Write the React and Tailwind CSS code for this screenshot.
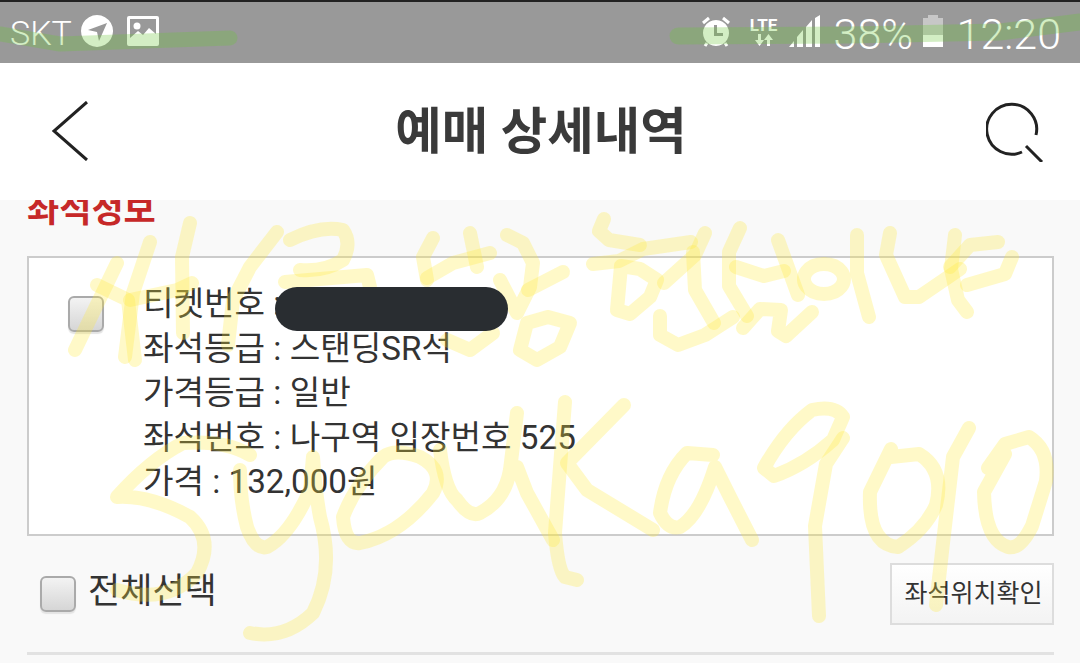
const yellow = [
  "M117 263L75 350","M97 285L128 300L135 360","M150 242L133 293L125 357","M190 223L182 257L183 333","M130 300L177 290L192 283",
  "M277 232L250 267L233 300L228 345","M290 240Q320 225 343 230Q352 243 343 260Q325 272 300 270","M285 282L367 275L370 287",
  "M433 238L423 257L427 280","M427 278L453 263L490 253","M470 233L477 267","M507 235L523 243L533 263L530 287L517 313L500 280",
  "M528 290L563 272","M548 317L570 323L560 347L537 360L520 350L527 323L548 317","M447 340L470 350L493 333",
  "M604 219L599 231L609 240L640 245","M593 264L619 261L643 249L691 242","M621 266L617 310L630 314L650 297L657 280L640 269L621 266",
  "M705 233L695 255L664 283","M693 252L695 290L714 323","M660 316L660 335L678 345L705 335L733 317","M740 228L729 252L729 286L747 316",
  "M736 267L764 276L784 271","M778 240L798 295","M824 264A20 15 0 1 1 823.9 264","M743 328L760 309L781 310L778 331L786 336L812 312",
  "M857 235L857 273L869 317","M890 233L886 255L905 297L919 297L960 269","M955 235L951 269L958 300L967 312","M998 242L970 245L950 267","M1012 257L1005 274L967 285",
  "M250 455Q225 440 183 443Q150 460 117 497Q150 495 190 517Q215 540 197 573Q167 605 117 590",
  "M240 470Q240 500 247 527Q255 550 267 547Q290 535 310 490L313 457Q315 490 320 517Q335 570 313 613Q285 640 250 633",
  "M420 457Q395 448 383 457Q355 485 343 517Q345 545 360 543Q400 535 433 493Q445 470 420 457",
  "M440 450Q445 490 457 500Q470 518 480 513Q505 500 510 470L517 413M517 467L527 493L553 540",
  "M565 402L560 467L555 533Q558 570 565 577L577 580","M624 405L567 463L587 490L653 530",
  "M713 455L687 453Q665 475 660 513Q668 530 680 527Q700 515 715 467L730 497L752 540",
  "M843 417Q835 405 812 410Q785 430 764 468L774 476Q805 465 833 440L843 417","M843 438L826 464L815 526L819 616",
  "M891 449L870 492Q868 545 898 547Q925 530 936 505Q945 470 919 454L891 457","M969 428L953 457L943 543L936 605",
  "M988 468L1005 444L1029 437Q1050 450 1046 481L1032 526Q1020 550 1008 547Q985 540 984 492L1005 454",
];

function Box() {
  return <div className="w-9 h-9 rounded-md border-2 border-[#aaaaaa] bg-gradient-to-b from-[#f3f3f3] to-[#d6d6d6] shadow-[0_2px_1px_#e4e4e4] shrink-0" />;
}

export default function App() {
  return (
    <div className="relative w-[1080px] h-[663px] overflow-hidden bg-[#f9f9f9] text-[#333] font-['Roboto','Noto_Sans_CJK_KR',sans-serif]">
      <div className="relative z-10 h-[63px] bg-[#999999] border-t-2 border-[#222] flex items-center justify-between pl-[10px] pr-[19px] text-white">
        <div className="flex items-center">
          <span className="text-[34px] font-light leading-none w-[71px]">SKT</span>
          <svg width="32" height="32" viewBox="0 0 32 32" className="-mt-1"><path fillRule="evenodd" fill="#fff" d="M16 0a16 16 0 1 0 .01 0ZM26 8 7 15l9 2 2 9Z"/></svg>
          <svg width="32" height="30" viewBox="0 0 32 30" className="ml-[14px] -mt-1"><path fillRule="evenodd" fill="#fff" d="M2 0h28a2 2 0 0 1 2 2v26a2 2 0 0 1-2 2H2a2 2 0 0 1-2-2V2a2 2 0 0 1 2-2ZM3 3v19l8-7 5 4 6-7 7 6V3Z"/><circle cx="10" cy="10" r="3.5" fill="#fff"/></svg>
        </div>
        <div className="flex items-center">
          <svg width="32" height="32" viewBox="0 0 32 32" className="-mt-1"><path stroke="#fff" strokeWidth="3" d="M3 8 9 3M29 8 23 3M7 28 5 31M25 28 27 31"/><path fillRule="evenodd" fill="#fff" d="M16 5a13 13 0 1 0 .01 0ZM14 10h3v8h6v3h-9Z"/></svg>
          <div className="flex flex-col items-center ml-[15px] w-[34px] -mt-1">
            <span className="text-[17px] font-bold leading-[18px]">LTE</span>
            <svg width="18" height="12" viewBox="0 0 18 12"><path fill="#fff" d="M3 0h3v6h3L4.500 12 0 6h3ZM12 12h3V6h3L13.500 0 9 6h3Z"/></svg>
          </div>
          <svg width="32" height="32" viewBox="0 0 32 32" className="ml-[8px] -mt-1"><path fill="#fff" d="M0 32l5-6v6ZM8 32V22l6-7v17ZM17 32V12l6-7v27ZM26 32V3l5-3v32Z"/></svg>
          <span className="text-[43px] font-light leading-none ml-[13px] w-[89px] mt-[3px]">38%</span>
          <svg width="20" height="32" viewBox="0 0 20 32" className="-mt-1"><path fill="#fff" fillOpacity=".45" d="M5 0h10v3h5v18H0V3h5Z"/><path fill="#fff" d="M0 20h20v12H0Z"/></svg>
          <span className="text-[43px] font-light leading-none ml-[14px] mt-[3px]">12:20</span>
        </div>
      </div>

      <header className="relative z-10 h-[137px] bg-white flex items-center justify-between px-[50px]">
        <svg width="40" height="60" viewBox="0 0 40 60" className="-mt-[2px]" fill="none" stroke="#222" strokeWidth="3"><path d="M37 1 4 30l33 29"/></svg>
        <h1 className="text-[50.500px] font-bold leading-none text-[#3a3a3a] mt-[2px] ml-[6px]">예매 상세내역</h1>
        <svg width="60" height="60" viewBox="0 0 60 60" className="-mr-[16px] mt-[0px]" fill="none" stroke="#222" strokeWidth="3"><path d="M36 50A25 25 0 1 1 50 33M40 44l16 16"/></svg>
      </header>

      <main className="px-[27px] -mt-[9px] w-[1054px] box-content pr-0">
        <h2 className="text-[35px] leading-[40px] font-bold text-[#c62828]">좌석정보</h2>
        <section className="mt-[25px] w-[1027px] h-[280px] border-2 border-[#cccccc] bg-white flex pl-[39px] pt-[24px]">
          <div className="pt-[14px]"><Box /></div>
          <div className="ml-[39px] text-[33.200px] leading-[44.500px]">
            <p>티켓번호 :</p>
            <p>좌석등급 : 스탠딩SR석</p>
            <p>가격등급 : 일반</p>
            <p>좌석번호 : 나구역 입장번호 525</p>
            <p>가격 : 132,000원</p>
          </div>
        </section>
        <div className="mt-[27px] w-[1027px] h-[62px] flex items-center justify-between">
          <div className="flex items-center pl-[13px]">
            <Box />
            <span className="ml-[12px] text-[35px] leading-none -mt-[6px]">전체선택</span>
          </div>
          <button className="w-[164px] h-[62px] border-2 border-[#dddddd] bg-gradient-to-b from-white to-[#f3f3f3] text-[25px] text-[#333] pl-[3px]">좌석위치확인</button>
        </div>
        <div className="mt-[27px] w-[1027px] h-[3px] bg-[#e2e2e2]" />
      </main>

      <svg className="absolute inset-0 z-20 pointer-events-none" width="1080" height="663" viewBox="0 0 1080 663" fill="none" strokeLinecap="round" strokeLinejoin="round">
        {yellow.map((d) => <path key={d} d={d} stroke="#ffe93b" strokeOpacity=".28" strokeWidth="14" />)}
        <path d="M0 34L60 44L230 38" stroke="#6ec83c" strokeOpacity=".3" strokeWidth="15" />
        <path d="M678 36L850 35L1000 32L1080 22" stroke="#6ec83c" strokeOpacity=".3" strokeWidth="17" />
      </svg>
      <div className="absolute z-30 left-[275px] top-[287px] w-[233px] h-[44px] rounded-full bg-[#292d31]" />
    </div>
  );
}
